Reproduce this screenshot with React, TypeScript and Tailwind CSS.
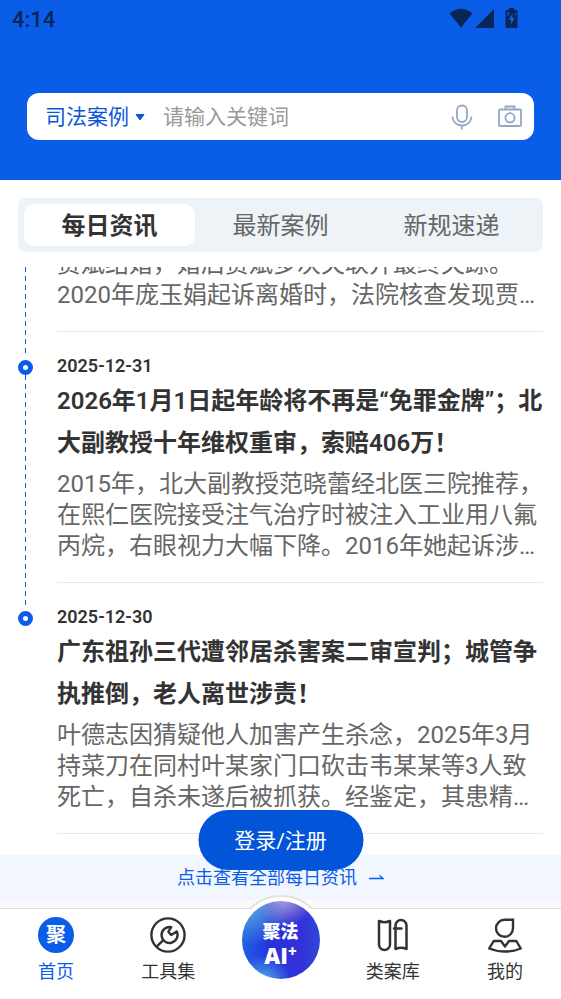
import { useState } from "react";

const TABS = ["每日资讯", "最新案例", "新规速递"];

interface NewsItem { date?: string; title?: string; body: string }

const NEWS: NewsItem[] = [
  { body: "贾斌结婚，婚后贾斌多次失联并最终失踪。2020年庞玉娟起诉离婚时，法院核查发现贾…" },
  {
    date: "2025-12-31",
    title: "2026年1月1日起年龄将不再是“免罪金牌”；北大副教授十年维权重审，索赔406万！",
    body: "2015年，北大副教授范晓蕾经北医三院推荐，在熙仁医院接受注气治疗时被注入工业用八氟丙烷，右眼视力大幅下降。2016年她起诉涉…",
  },
  {
    date: "2025-12-30",
    title: "广东祖孙三代遭邻居杀害案二审宣判；城管争执推倒，老人离世涉责！",
    body: "叶德志因猜疑他人加害产生杀念，2025年3月持菜刀在同村叶某家门口砍击韦某某等3人致死亡，自杀未遂后被抓获。经鉴定，其患精…",
  },
];

function StatusBar() {
  return (
    <div className="flex h-[38px] items-center justify-between pl-3 pr-[42px] text-[#082558]">
      <span className="text-[22px] font-medium">4:14</span>
      <svg className="mb-0.5" width="70" height="20" viewBox="0 0 70 20" fill="currentColor" aria-hidden="true">
        <path d="M.5 5.500C7-.8 17-.8 23.500 5.500L12 19.500z" />
        <path d="M45 1v19H26z" />
        <path d="M60 0h5v2h2.500a1 1 0 0 1 1 1v16a1 1 0 0 1-1 1h-10a1 1 0 0 1-1-1V3a1 1 0 0 1 1-1H60z" />
        <path d="M63.500 5l-4 7H62v4.500l3.800-6.500h-2.300z" fill="#0a5de7" />
        <path d="M58 4.500h3v1h-1.500v2H58zM66 4.500h1v3h-1z" fill="#0a5de7" />
      </svg>
    </div>
  );
}

function SearchBar() {
  return (
    <form className="mx-[27px] mt-[55px] flex h-[47px] items-center rounded-xl bg-white pl-[18px] pr-[11px] text-[21px]">
      <label className="relative flex items-center pt-0.5 text-[#0b55dc]">
        <select aria-label="检索类型" className="w-[100px] appearance-none bg-transparent outline-none">
          <option>司法案例</option>
        </select>
        <svg className="pointer-events-none absolute right-0" width="10" height="7" viewBox="0 0 10 7" aria-hidden="true">
          <path d="M1 .5h8L5 6z" fill="currentColor" stroke="currentColor" strokeLinejoin="round" />
        </svg>
      </label>
      <input
        type="text"
        aria-label="关键词"
        placeholder="请输入关键词"
        className="ml-[18px] min-w-0 flex-1 bg-transparent pt-0.5 outline-none placeholder:text-[#999]"
      />
      <button type="button" aria-label="语音输入" className="text-[#93a8c6]">
        <svg width="22" height="26" viewBox="0 0 22 26" fill="none" stroke="currentColor" strokeWidth="1.800">
          <rect x="6" y="1.500" width="10" height="16.500" rx="5" />
          <path d="M1.500 12.500c0 5 4 9 9.500 9s9.500-4 9.500-9M11 21.500v4" />
        </svg>
      </button>
      <button type="button" aria-label="拍照" className="ml-6 text-[#93a8c6]">
        <svg width="26" height="24" viewBox="0 0 26 24" fill="none" stroke="currentColor" strokeWidth="1.800">
          <rect x="2" y="4.500" width="22" height="16.500" rx="1" />
          <path d="M8.500 4.500V1.500h9v3" />
          <circle cx="13" cy="12.800" r="4.600" />
        </svg>
      </button>
    </form>
  );
}

function NewsRow({ item, last }: { item: NewsItem; last: boolean }) {
  return (
    <article className="flex shrink-0 gap-6">
      <div className="flex w-[15px] shrink-0 flex-col items-center">
        {item.date && <span className="mt-7 h-[15px] w-[15px] shrink-0 rounded-full border-[5px] border-[#0a5de7]" />}
        {!last && (
          <span className="-mb-[22px] w-px flex-1 bg-[#0a5de7] [mask-image:repeating-linear-gradient(to_bottom,#000_0px,#000_5px,transparent_5px,transparent_9px)]" />
        )}
      </div>
      <div className="min-w-0 flex-1 border-b border-[#e9e9e9] pb-5">
        {item.date && <time className="mt-6 block text-[18px] leading-5 font-semibold text-[#333]">{item.date}</time>}
        {item.title && <h2 className="-mr-2 mt-1 mb-[5px] text-[24px] leading-[42px] font-semibold text-[#333]">{item.title}</h2>}
        <p className="text-[24px] leading-[31px] text-[#666]">{item.body}</p>
      </div>
    </article>
  );
}

function ToolIcon() {
  return (
    <svg width="36" height="36" viewBox="0 0 36 36" fill="none" stroke="currentColor" strokeWidth="2.400" aria-hidden="true">
      <circle cx="18" cy="18" r="16.600" />
      <path d="M21.300 10.200a8 8 0 1 0 5.400 4.200L21.200 18l-2.800-3.300z" strokeLinejoin="round" />
      <path d="M13 23.300l-6.800 6.800" />
    </svg>
  );
}

function CaseIcon() {
  return (
    <svg width="36" height="36" viewBox="0 0 36 36" fill="none" stroke="currentColor" strokeWidth="2.500" strokeLinejoin="round" strokeLinecap="round" aria-hidden="true">
      <path d="M4 4c3.500 1.600 7.500 1.600 11 0v23.500a5.500 5.500 0 0 1-11 0z" />
      <path d="M20.500 32V8.500a5.500 5.500 0 0 1 11 0V32c-3.500-1.600-7.500-1.600-11 0zM19 11.500h7.500" />
    </svg>
  );
}

function MineIcon() {
  return (
    <svg width="36" height="36" viewBox="0 0 36 36" fill="none" stroke="currentColor" strokeWidth="2.400" aria-hidden="true">
      <path d="M17.500 2.800H26v8.400a8.500 8.500 0 1 1-8.500-8.400z" />
      <path d="M6.700 24h7.300l4 5.500 4-5.500h7.300l4.500 7.500c-9.500 4-22.100 4-31.600 0z" strokeLinejoin="round" />
    </svg>
  );
}

function HomeIcon() {
  return (
    <span className="flex h-9 w-9 items-center justify-center rounded-full bg-[#0a5de7] text-[20px] leading-none font-bold text-white">
      聚
    </span>
  );
}

const LINK = "flex flex-1 flex-col items-center gap-[5px] pt-2 text-[18px] leading-7";

function BottomNav() {
  return (
    <nav className="relative flex h-[91px] shrink-0 border-t border-[#ddd] bg-white text-[#333]">
      <a href="#home" className={`${LINK} text-[#0a5de7]`}><HomeIcon />首页</a>
      <a href="#tools" className={LINK}><ToolIcon />工具集</a>
      <div className="flex flex-1 justify-center">
        <div className="absolute -top-3.5 h-[90px] w-[90px] rounded-full border-2 border-[#e2e2e2] bg-white [clip-path:inset(0_0_76px_0)]" />
        <a
          href="#ai"
          className="absolute -top-2 flex h-[78px] w-[78px] flex-col items-center rounded-full bg-[radial-gradient(circle_at_55%_-5%,#b5a5d6_0%,#b5a5d600_32%),radial-gradient(circle_at_28%_105%,#4fb6e8_0%,#4fb6e800_28%),radial-gradient(circle_at_12%_8%,#5aa4e0_0%,#5aa4e000_38%),linear-gradient(90deg,#1d62e4,#2533dc_35%,#3330d8_75%,#3048d8)] pt-5 font-extrabold text-white"
        >
          <span className="text-[18px] leading-[22px]">聚法</span>
          <span className="flex items-start font-['Open_Sans'] text-[22px] leading-6">
            AI<span className="text-[15px] leading-4">+</span>
          </span>
        </a>
      </div>
      <a href="#cases" className={LINK}><CaseIcon />类案库</a>
      <a href="#mine" className={LINK}><MineIcon />我的</a>
    </nav>
  );
}

export default function App() {
  const [tab, setTab] = useState(0);

  return (
    <div className="relative flex h-screen flex-col bg-white font-[Roboto,'Noto_Sans_CJK_SC',sans-serif]">
      <header className="h-[180px] shrink-0 bg-[#0a5de7]">
        <StatusBar />
        <SearchBar />
      </header>

      <div className="mx-[18px] mt-[18px] flex h-[54px] shrink-0 rounded-lg bg-[#edf3f6] p-1.5">
        {TABS.map((t, i) => (
          <button
            key={t}
            onClick={() => setTab(i)}
            className={`flex-1 rounded-[10px] pt-0.5 text-[24px] leading-8 ${i === tab ? "bg-white font-bold text-[#333]" : "text-[#666]"}`}
          >{t}</button>
        ))}
      </div>

      <main className="mt-[15px] flex min-h-0 flex-1 flex-col justify-end overflow-hidden px-[18px] pb-[21px]">
        {NEWS.map((n, i) => <NewsRow key={i} item={n} last={i === NEWS.length - 1} />)}
      </main>

      <a href="#all" className="flex h-[45px] shrink-0 items-center justify-center gap-3 bg-[#f2f7ff] text-[18px] text-[#0a5de7]">
        点击查看全部每日资讯
        <svg width="15" height="6" viewBox="0 0 15 6" fill="none" stroke="currentColor" aria-hidden="true">
          <path d="M0 3.500h14L10.500 .5" strokeWidth="1.300" />
        </svg>
      </a>
      <div className="h-2 shrink-0 bg-[#fafafa]" />
      <BottomNav />

      <button className="absolute bottom-[129px] left-1/2 h-[60px] w-[165px] -translate-x-1/2 rounded-full bg-[#0254d8] pt-1 text-[21px] text-white">
        登录/注册
      </button>
    </div>
  );
}
